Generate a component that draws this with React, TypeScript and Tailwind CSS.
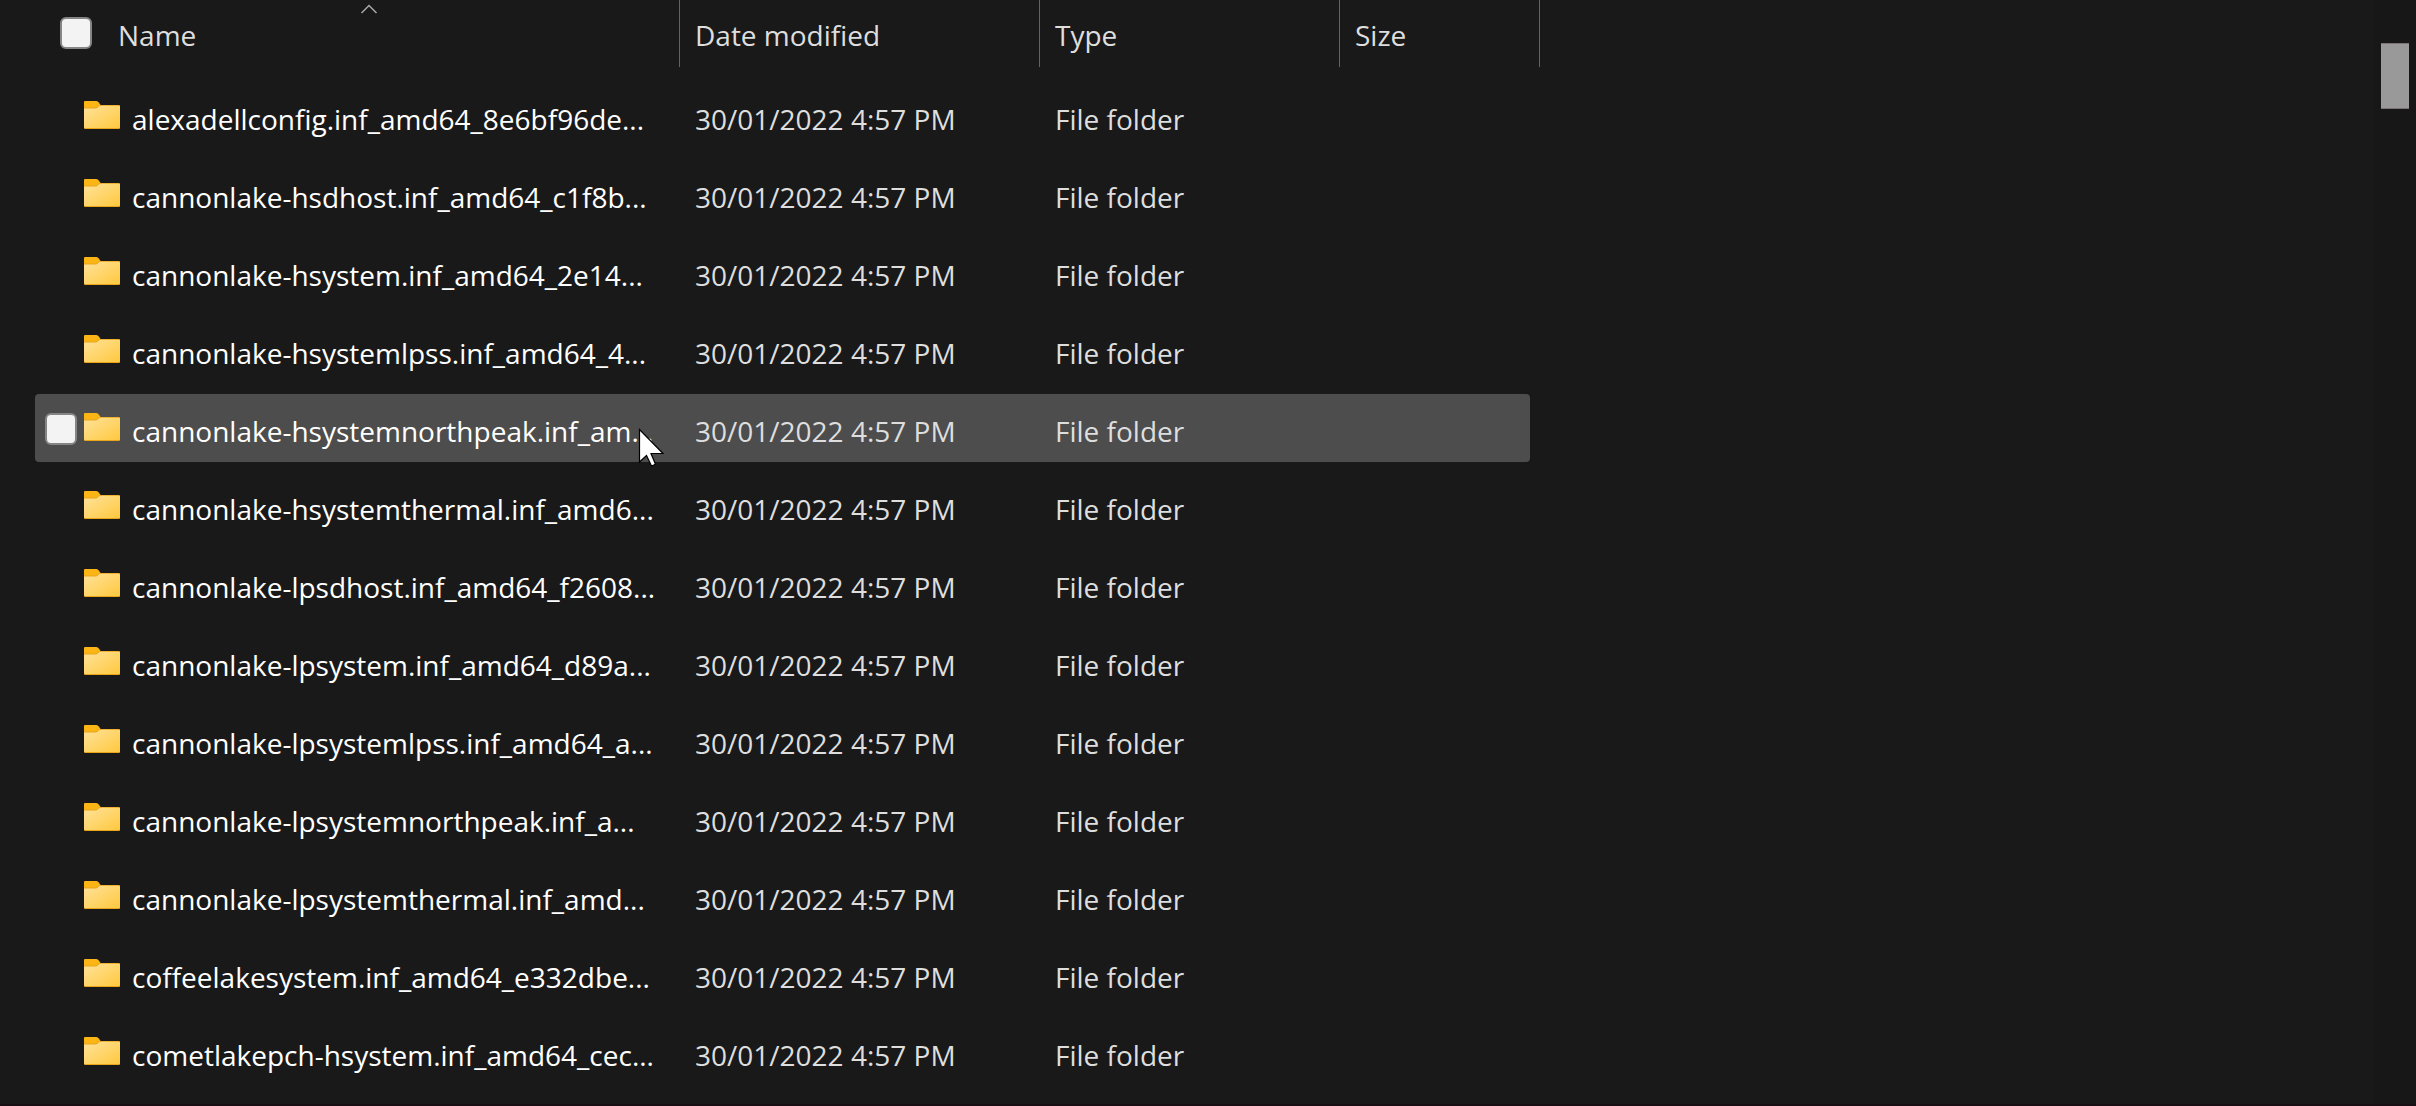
type Entry = {
  name: string
  modified: string
  type: string
  hovered?: boolean
}

const MODIFIED = '30/01/2022 4:57 PM'
const TYPE = 'File folder'

const entries: Entry[] = [
  { name: 'alexadellconfig.inf_amd64_8e6bf96de...', modified: MODIFIED, type: TYPE },
  { name: 'cannonlake-hsdhost.inf_amd64_c1f8b...', modified: MODIFIED, type: TYPE },
  { name: 'cannonlake-hsystem.inf_amd64_2e14...', modified: MODIFIED, type: TYPE },
  { name: 'cannonlake-hsystemlpss.inf_amd64_4...', modified: MODIFIED, type: TYPE },
  { name: 'cannonlake-hsystemnorthpeak.inf_am...', modified: MODIFIED, type: TYPE, hovered: true },
  { name: 'cannonlake-hsystemthermal.inf_amd6...', modified: MODIFIED, type: TYPE },
  { name: 'cannonlake-lpsdhost.inf_amd64_f2608...', modified: MODIFIED, type: TYPE },
  { name: 'cannonlake-lpsystem.inf_amd64_d89a...', modified: MODIFIED, type: TYPE },
  { name: 'cannonlake-lpsystemlpss.inf_amd64_a...', modified: MODIFIED, type: TYPE },
  { name: 'cannonlake-lpsystemnorthpeak.inf_a...', modified: MODIFIED, type: TYPE },
  { name: 'cannonlake-lpsystemthermal.inf_amd...', modified: MODIFIED, type: TYPE },
  { name: 'coffeelakesystem.inf_amd64_e332dbe...', modified: MODIFIED, type: TYPE },
  { name: 'cometlakepch-hsystem.inf_amd64_cec...', modified: MODIFIED, type: TYPE },
]

function FolderIcon() {
  return (
    <svg width="36" height="28" viewBox="0 0 36 28" className="shrink-0" aria-hidden="true">
      <defs>
        <linearGradient id="folder" x1="0" y1="0" x2="1" y2="1">
          <stop offset="0" stopColor="#ffe29a" />
          <stop offset="1" stopColor="#ffc93f" />
        </linearGradient>
      </defs>
      <path d="M0 1a1 1 0 0 1 1-1h11q1.500 0 2.500 1.200L17 4.500V9H0z" fill="#fbb616" />
      <path d="M0 6.500h11.500q1.300 0 2.200-.8L15 4.600q.8-.6 2-.6H35a1 1 0 0 1 1 1V27a1 1 0 0 1-1 1H1a1 1 0 0 1-1-1z" fill="#e9a51c" />
      <path d="M0 7.500h11.500q1.400 0 2.300-1l1.400-1.200q.7-.6 1.800-.6H35a1 1 0 0 1 1 1V26a1 1 0 0 1-1 1H1a1 1 0 0 1-1-1z" fill="url(#folder)" />
    </svg>
  )
}

function Pointer() {
  return (
    <svg
      width="28"
      height="40"
      viewBox="0 0 28 40"
      className="absolute left-[603px] top-[34px] z-10 pointer-events-none"
      aria-hidden="true"
    >
      <path
        d="M1.500 1.500V34L8.500 27.500L13.500 38L17.500 36.200L13 25.500H25z"
        fill="#fff"
        stroke="#000"
        strokeWidth="1.200"
      />
    </svg>
  )
}

function CheckBox({ label }: { label: string }) {
  return (
    <input
      type="checkbox"
      aria-label={label}
      className="appearance-none shrink-0 w-8 h-8 rounded-md border-2 border-[#858585] bg-[#f3f3f3] checked:bg-sky-400"
    />
  )
}

function HeaderCell({ label }: { label: string }) {
  return (
    <th className="h-[77px] p-0 align-top font-normal text-left">
      <button type="button" className="flex items-center w-full h-[67px] pl-[15px] pb-[2px] pt-1 border-r border-[#636363]">
        {label}
      </button>
    </th>
  )
}

function Row({ entry }: { entry: Entry }) {
  const bg = entry.hovered ? 'bg-[#4d4d4d]' : ''
  return (
    <tr>
      <td className="h-[78px] p-0">
        <div className={`relative flex items-center h-[68px] rounded-l-sm ${bg}`}>
          <div className="flex w-[49px] pl-[10px] pt-[2px]">
            {entry.hovered && <CheckBox label={`Select ${entry.name}`} />}
          </div>
          <div className="pb-[2px]">
            <FolderIcon />
          </div>
          <span className="pl-3 pt-[6px] text-white whitespace-nowrap">{entry.name}</span>
          {entry.hovered && <Pointer />}
        </div>
      </td>
      <td className="p-0">
        <div className={`flex items-center h-[68px] pl-[15px] pt-[6px] whitespace-nowrap ${bg}`}>{entry.modified}</div>
      </td>
      <td className="p-0">
        <div className={`flex items-center h-[68px] pl-[15px] pt-[6px] whitespace-nowrap ${bg}`}>{entry.type}</div>
      </td>
      <td className="p-0">
        <div className={`h-[68px] mr-[10px] rounded-r-sm ${bg}`} />
      </td>
    </tr>
  )
}

export default function App() {
  return (
    <main className="flex min-h-screen bg-[#191919] border-b-2 border-[#170f14] font-['Open_Sans','Noto_Sans',sans-serif] text-[28px] leading-[40px] text-[#dedede]">
      <div className="flex-1 pl-[35px]">
        <table className="w-[1505px] table-fixed border-collapse">
          <colgroup>
            <col className="w-[645px]" />
            <col className="w-[360px]" />
            <col className="w-[300px]" />
            <col className="w-[200px]" />
          </colgroup>
          <thead>
            <tr>
              <th className="h-[77px] p-0 align-top font-normal text-left">
                <div className="relative flex items-center h-[67px] pl-[25px] pb-px border-r border-[#636363]">
                  <CheckBox label="Select all" />
                  <button type="button" className="flex-1 pl-[26px] pt-1 text-left">
                    Name
                  </button>
                  <svg
                    width="18"
                    height="10"
                    viewBox="0 0 18 10"
                    className="absolute left-[325px] top-[4px]"
                    aria-hidden="true"
                  >
                    <path d="M1.500 9L9 1.500L16.500 9" fill="none" stroke="#a8a8a8" strokeWidth="1.500" />
                  </svg>
                </div>
              </th>
              <HeaderCell label="Date modified" />
              <HeaderCell label="Type" />
              <HeaderCell label="Size" />
            </tr>
          </thead>
          <tbody>
            {entries.map((entry) => (
              <Row key={entry.name} entry={entry} />
            ))}
          </tbody>
        </table>
      </div>
      <div className="w-[43px] pl-2 pt-[43px] bg-[#171717]">
        <div className="w-7 h-[66px] bg-[#999] border-y border-[#7d7476]" />
      </div>
    </main>
  )
}
